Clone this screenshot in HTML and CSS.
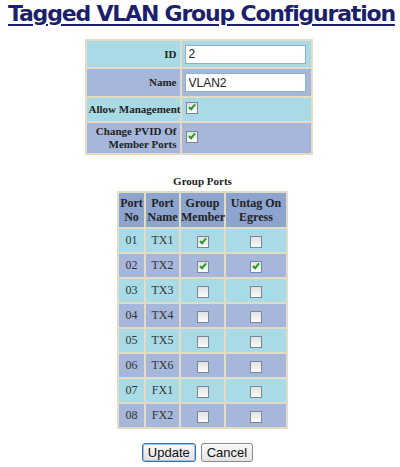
FILE: index.html
```html
<!DOCTYPE html>
<html lang="en">
<head>
    <meta charset="UTF-8">
    <title>Tagged VLAN Group Configuration</title>
    <link rel="stylesheet" href="styles.css">
</head>
<body>
    <h1 class="page-title">Tagged VLAN Group Configuration</h1>
    <form class="vlan-form">
        <table class="cfg-table">
            <tr class="row-a r1">
                <th>ID</th>
                <td><input class="text-in" type="text" value="2"></td>
            </tr>
            <tr class="row-b r2">
                <th>Name</th>
                <td><input class="text-in" type="text" value="VLAN2"></td>
            </tr>
            <tr class="row-a r3">
                <th>Allow Management</th>
                <td><span class="cb checked"></span></td>
            </tr>
            <tr class="row-b r4">
                <th>Change PVID Of<br>Member Ports</th>
                <td><span class="cb checked"></span></td>
            </tr>
        </table>

        <div class="ports-caption">Group Ports</div>
        <table class="ports-table">
            <colgroup>
                <col class="c-no">
                <col class="c-name">
                <col class="c-member">
                <col class="c-untag">
            </colgroup>
            <tr class="head">
                <th>Port<br>No</th>
                <th>Port<br>Name</th>
                <th>Group<br>Member</th>
                <th>Untag On<br>Egress</th>
            </tr>
            <tr class="row-a"><td>01</td><td>TX1</td><td><span class="cb checked"></span></td><td><span class="cb"></span></td></tr>
            <tr class="row-b"><td>02</td><td>TX2</td><td><span class="cb checked"></span></td><td><span class="cb checked"></span></td></tr>
            <tr class="row-a"><td>03</td><td>TX3</td><td><span class="cb"></span></td><td><span class="cb"></span></td></tr>
            <tr class="row-b"><td>04</td><td>TX4</td><td><span class="cb"></span></td><td><span class="cb"></span></td></tr>
            <tr class="row-a"><td>05</td><td>TX5</td><td><span class="cb"></span></td><td><span class="cb"></span></td></tr>
            <tr class="row-b"><td>06</td><td>TX6</td><td><span class="cb"></span></td><td><span class="cb"></span></td></tr>
            <tr class="row-a"><td>07</td><td>FX1</td><td><span class="cb"></span></td><td><span class="cb"></span></td></tr>
            <tr class="row-b"><td>08</td><td>FX2</td><td><span class="cb"></span></td><td><span class="cb"></span></td></tr>
        </table>

        <div class="actions">
            <button class="btn btn-default" type="button">Update</button>
            <button class="btn" type="button">Cancel</button>
        </div>
    </form>
</body>
</html>
```

FILE: styles.css
```css
body {
    margin: 0;
    padding: 0 8px;
    background: #ffffff;
    font-family: "Liberation Serif", serif;
    color: #222;
    overflow: hidden;
}
.page-title {
    margin: 0;
    padding-top: 1px;
    font-family: "DejaVu Sans", Verdana, sans-serif;
    font-size: 22px;
    font-weight: bold;
    letter-spacing: -1.2px;
    color: #1c1f6b;
    text-decoration: underline;
    text-decoration-thickness: 2px;
    text-underline-offset: 3px;
    line-height: 26px;
    white-space: nowrap;
}
.vlan-form {
    display: flex;
    flex-direction: column;
    align-items: center;
}
table {
    border-collapse: separate;
    border-spacing: 2px;
    background: #e2dcc6;
    font-size: 12px;
    table-layout: fixed;
}
.row-a {
    background: #a9dbe7;
}
.row-b {
    background: #a6b7db;
}
.cfg-table {
    margin-top: 12px;
    margin-left: -3px;
    width: 228px;
}
.cfg-table th {
    width: 88px;
    padding: 0 3px 0 2px;
    text-align: right;
    font-size: 11px;
    font-weight: bold;
    line-height: 13px;
    white-space: nowrap;
}
.cfg-table td {
    padding: 0 5px 0 3px;
}
.cfg-table .r1 { height: 26px; }
.cfg-table .r2 { height: 27px; }
.cfg-table .r3 { height: 23px; }
.cfg-table .r4 { height: 30px; }
.text-in {
    display: block;
    width: 100%;
    box-sizing: border-box;
    height: 19px;
    border: 1px solid #8fb0c4;
    padding: 0 3px;
    font-family: "Liberation Sans", Arial, sans-serif;
    font-size: 12px;
    color: #222;
    background: #fff;
}
.cb {
    display: inline-block;
    width: 10px;
    height: 10px;
    border: 1px solid #7a8595;
    background: linear-gradient(#e2e2e2, #fbfbfb);
    vertical-align: middle;
    position: relative;
}
.cb.checked::after {
    content: '';
    position: absolute;
    left: 3px;
    top: 0px;
    width: 2px;
    height: 5px;
    border: solid #2a9a2a;
    border-width: 0 2px 2px 0;
    transform: rotate(40deg);
}
.cfg-table .cb {
    margin-left: 1px;
    margin-top: -4px;
}
.ports-caption {
    margin-top: 20px;
    margin-left: 5px;
    font-weight: bold;
    font-size: 11px;
    color: #222;
}
.ports-table {
    margin-top: 4px;
    margin-left: 5px;
    width: 171px;
}
.c-no { width: 25px; }
.c-name { width: 33px; }
.c-member { width: 43px; }
.ports-table th {
    background: #8da4cf;
    font-weight: bold;
    line-height: 14px;
    padding: 3px 0;
    white-space: nowrap;
    color: #222;
}
.ports-table td {
    text-align: center;
    height: 23px;
    padding: 0;
    color: #333;
}
.ports-table td .cb {
    margin-top: 2px;
}
.actions {
    display: flex;
    gap: 5px;
    margin-top: 14px;
    margin-left: -5px;
}
.btn {
    height: 19px;
    padding: 0 5px;
    font-family: "Liberation Sans", Arial, sans-serif;
    font-size: 13px;
    color: #111;
    background: linear-gradient(#fafafa, #e2e2e2);
    border: 1px solid #8a8a8a;
    border-radius: 3px;
}
.btn-default {
    border-color: #3a6fb0;
    box-shadow: inset 0 0 0 1px #9cc3ea;
}
```
